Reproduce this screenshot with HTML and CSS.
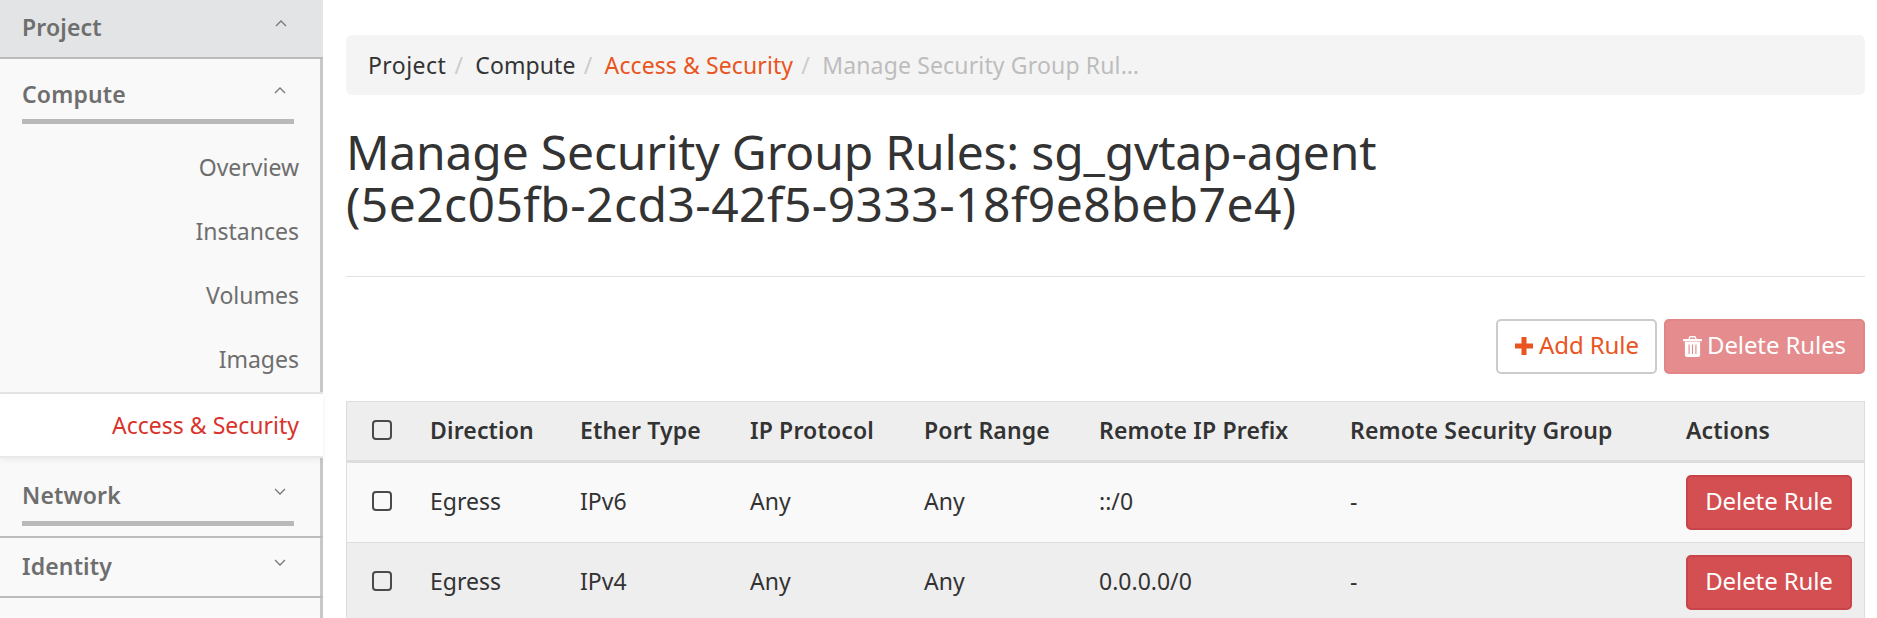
FILE: index.html
```
<!DOCTYPE html>
<html lang="en">
<head>
<meta charset="utf-8">
<title>Manage Security Group Rules</title>
<link rel="stylesheet" href="styles.css">
</head>
<body>
<div class="layout">
  <nav class="sidebar">
    <div class="nav-top"><span>Project</span>
      <svg class="chev" viewBox="0 0 12 7"><path d="M1 6 6 1l5 5"/></svg></div>
    <div class="nav-group nav-compute"><span>Compute</span>
      <svg class="chev" viewBox="0 0 12 7"><path d="M1 6 6 1l5 5"/></svg></div>
    <ul class="nav-items">
      <li>Overview</li>
      <li>Instances</li>
      <li>Volumes</li>
      <li>Images</li>
    </ul>
    <div class="nav-active">Access &amp; Security</div>
    <div class="nav-section">
      <div class="nav-group nav-network"><span>Network</span>
        <svg class="chev" viewBox="0 0 12 7"><path d="M1 1l5 5 5-5"/></svg></div>
    </div>
    <div class="nav-section nav-identity">
      <div class="nav-plain"><span>Identity</span>
        <svg class="chev" viewBox="0 0 12 7"><path d="M1 1l5 5 5-5"/></svg></div>
    </div>
  </nav>
  <main class="main">
    <ol class="crumbs">
      <li class="crumb-first">Project</li>
      <li class="sep">/</li>
      <li>Compute</li>
      <li class="sep">/</li>
      <li class="crumb-link">Access &amp; Security</li>
      <li class="sep">/</li>
      <li class="crumb-current">Manage Security Group Rul…</li>
    </ol>
    <h1 class="title"><span class="title-a">Manage Security Group Rules: sg_gvtap-agent</span><br><span class="title-b">(5e2c05fb-2cd3-42f5-9333-18f9e8beb7e4)</span></h1>
    <hr class="rule">
    <div class="toolbar">
      <button class="btn btn-add"><svg class="ico" viewBox="0 0 20 20"><path d="M7.500 1h5v6.500h6.500v5h-6.500v6.500h-5v-6.500h-6.500v-5h6.500z"/></svg>Add Rule</button>
      <button class="btn btn-del-all"><svg class="ico" viewBox="0 0 20 22"><path fill-rule="evenodd" d="M7 0h6l1.500 3H19a1 1 0 0 1 1 1v1.500H0V4a1 1 0 0 1 1-1h4.500zM7.600 1.500 7 3h6l-.6-1.500zM2 6h16v14a2 2 0 0 1-2 2H4a2 2 0 0 1-2-2zM5.800 9v10H7V9zm3.600 0v10h1.200V9zM13 9v10h1.200V9z"/></svg>Delete Rules</button>
    </div>
    <table class="rules">
      <colgroup>
        <col class="c-check"><col class="c-dir"><col class="c-eth"><col class="c-ip"><col class="c-port"><col class="c-prefix"><col class="c-group"><col class="c-act">
      </colgroup>
      <thead>
        <tr>
          <th><span class="check"></span></th>
          <th>Direction</th>
          <th>Ether Type</th>
          <th>IP Protocol</th>
          <th>Port Range</th>
          <th>Remote IP Prefix</th>
          <th>Remote Security Group</th>
          <th>Actions</th>
        </tr>
      </thead>
      <tbody>
        <tr>
          <td><span class="check"></span></td>
          <td>Egress</td><td>IPv6</td><td>Any</td><td>Any</td><td>::/0</td><td>-</td>
          <td><button class="btn btn-del">Delete Rule</button></td>
        </tr>
        <tr class="alt">
          <td><span class="check"></span></td>
          <td>Egress</td><td>IPv4</td><td>Any</td><td>Any</td><td>0.0.0.0/0</td><td>-</td>
          <td><button class="btn btn-del">Delete Rule</button></td>
        </tr>
      </tbody>
    </table>
  </main>
</div>
</body>
</html>
```
FILE: styles.css
```
* { box-sizing: border-box; }
html, body { margin: 0; height: 618px; overflow: hidden; background: #fff; }
body { font-family: "Noto Sans", "Open Sans", sans-serif; font-size: 23px; color: #333; }

.layout { display: flex; align-items: stretch; height: 618px; }

/* Sidebar */
.sidebar {
  width: 323px; flex: none; background: #f9f9f9; color: #6e6e6e;
  border-right: 3px solid #c8c8c8; display: flex; flex-direction: column;
}
.nav-top {
  height: 59px; margin-right: -3px; background: #e3e4e6; border-bottom: 2px solid #bbb;
  padding: 0 36px 3px 22px; display: flex; align-items: center; justify-content: space-between;
  font-weight: 600; font-size: 23px; letter-spacing: .15px;
}
.nav-group {
  margin: 0 26px 0 22px; border-bottom: 5px solid #b9b9b9;
  display: flex; align-items: center; justify-content: space-between;
  padding-right: 8px; font-weight: 600; font-size: 23px; letter-spacing: .15px;
}
.nav-compute { height: 65px; padding-top: 10px; }
.nav-network { height: 68px; padding-top: 11px; }
.nav-plain {
  height: 57px; margin: 0 26px 0 22px; padding: 0 8px 2px 0;
  display: flex; align-items: center; justify-content: space-between;
  font-weight: 600; font-size: 23px; letter-spacing: .15px;
}
.chev { width: 12px; height: 7px; fill: none; stroke: #777; stroke-width: 1.300; margin-top: -7px; }
.nav-items {
  list-style: none; margin: 0 -3px 0 0; padding: 11px 24px 0 0; height: 270px;
  border-bottom: 2px solid #e5e5e5; text-align: right; font-size: 23px;
}
.nav-items li { height: 64px; line-height: 64px; }
.nav-active {
  height: 64px; margin-right: -3px; background: #fff; color: #d9332b;
  padding-right: 24px; text-align: right; line-height: 62px; font-size: 23px;
  border-bottom: 2px solid #e8e8e8; box-shadow: 0 2px 6px rgba(0,0,0,.06);
}
.nav-section { border-bottom: 2px solid #bbb; margin-right: -3px; padding-right: 3px; height: 80px; }
.nav-identity { height: 60px; }

/* Main */
.main { flex: 1; min-width: 0; padding: 35px 12px 0 23px; }
.crumbs {
  list-style: none; margin: 0; height: 60px; padding: 0 22px; background: #f4f4f4; border-radius: 6px;
  display: flex; align-items: center; font-size: 23px; letter-spacing: .1px; color: #333;
}
.crumb-first { letter-spacing: .45px; }
.sep { color: #ccc; width: 29px; text-align: center; padding-right: 4px; }
.crumb-link { color: #e95420; }
.crumb-current { color: #bdbdbd; letter-spacing: .15px; }
.title { margin: 31px 0 0; font-weight: 400; font-size: 48px; line-height: 52px; color: #333; }
.title-a { letter-spacing: -.18px; }
.title-b { letter-spacing: .43px; }
.rule { border: 0; border-top: 1px solid #e2e2e2; margin: 46px 0 0; }

.toolbar { display: flex; justify-content: flex-end; gap: 7px; margin-top: 42px; }
.btn {
  font: inherit; font-size: 24px; height: 55px; border-radius: 5px; display: inline-flex; align-items: center; justify-content: center;
  padding: 0 0 4px; letter-spacing: -.1px;
}
.ico { fill: currentColor; flex: none; }
.btn-add { width: 161px; background: #fff; border: 2px solid #ccc; color: #e95420; }
.btn-add .ico { width: 20px; height: 20px; margin: 2px 5px 0 0; }
.btn-del-all { width: 201px; background: #e48c8e; border: 2px solid #e28587; color: #fff; }
.btn-del-all .ico { width: 19px; height: 21px; margin: 3px 5px 0 0; }

/* Table */
.rules {
  width: 100%; table-layout: fixed; border-collapse: separate; border-spacing: 0;
  margin-top: 27px; border: 1px solid #ddd; border-bottom: 0;
}
.c-check { width: 69px; } .c-dir { width: 150px; } .c-eth { width: 170px; } .c-ip { width: 174px; }
.c-port { width: 175px; } .c-prefix { width: 251px; } .c-group { width: 336px; }
th, td { padding: 0 14px; text-align: left; vertical-align: middle; }
th { height: 61px; padding-bottom: 3px; background: #eee; border-bottom: 3px solid #ddd; font-weight: 600; font-size: 23px; letter-spacing: .15px; }
td { height: 80px; padding-bottom: 3px; background: #f9f9f9; border-bottom: 1px solid #ddd; }
td:last-child { padding-bottom: 0; }
.alt td { background: #eee; }
th:first-child, td:first-child { padding-left: 25px; }
.check { display: block; width: 20px; height: 20px; border: 2px solid #4a4a4a; border-radius: 4px; }
.btn-del { width: 166px; background: #d44f52; border: 2px solid #c9434a; color: #fff; }
```
